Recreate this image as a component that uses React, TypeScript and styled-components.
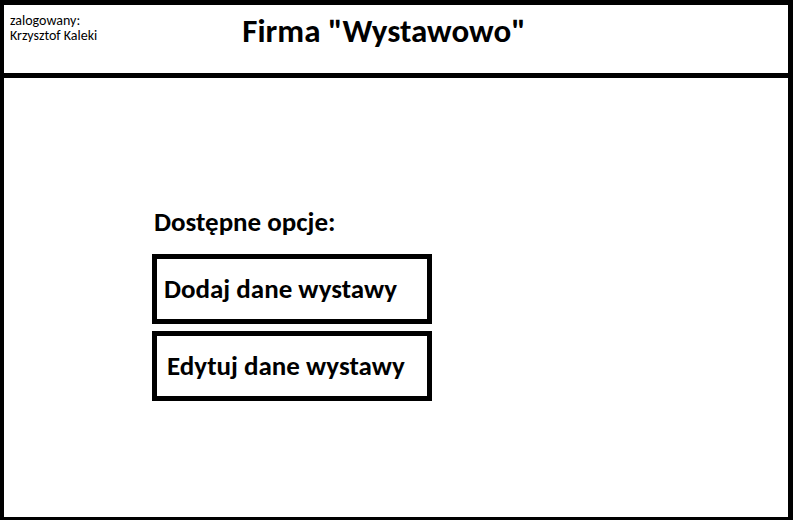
import React from "react";
import styled, { createGlobalStyle } from "styled-components";

const GlobalStyle = createGlobalStyle`
  * { box-sizing: border-box; }
  body { margin: 0; background: #fff; }
`;

const Page = styled.div`
  min-height: 100vh;
  display: flex;
  flex-direction: column;
  border: solid #000;
  border-width: 5px 5px 3px 4px;
  background: #fff;
  color: #000;
  font-family: Carlito, Calibri, Lato, "Open Sans", sans-serif;
`;

const Header = styled.header`
  display: grid;
  grid-template-columns: 1fr auto 1fr;
  min-height: 73px;
  border-bottom: 5px solid #000;
`;

const Session = styled.p`
  margin: 0;
  padding: 8px 0 0 6px;
  font-size: 14px;
  line-height: 15px;
  white-space: nowrap;
`;

const Title = styled.h1`
  margin: 0;
  padding: 6px 24px 0 0;
  font-size: 33px;
  line-height: 40px;
  font-weight: 700;
  white-space: nowrap;
`;

const Options = styled.main`
  display: flex;
  flex-direction: column;
  align-items: flex-start;
  padding: 126px 16px 16px 148px;
`;

const OptionsTitle = styled.h2`
  margin: 0 0 14px 2px;
  font-size: 27px;
  line-height: 36px;
  font-weight: 700;
`;

const OptionList = styled.div`
  display: flex;
  flex-direction: column;
  gap: 7px;
`;

const OptionButton = styled.button<{ $inset: number }>`
  width: 280px;
  height: 70px;
  padding: 0 0 0 ${({ $inset }) => $inset}px;
  border: 5px solid #000;
  background: #fff;
  color: #000;
  font: inherit;
  font-size: 27px;
  line-height: 32px;
  font-weight: 700;
  text-align: left;
  white-space: nowrap;
  cursor: pointer;
`;

export default function App() {
  return (
    <>
      <GlobalStyle />
      <Page>
        <Header>
          <Session>
            zalogowany:
            <br />
            Krzysztof Kaleki
          </Session>
          <Title>Firma "Wystawowo"</Title>
        </Header>
        <Options>
          <OptionsTitle>Dostępne opcje:</OptionsTitle>
          <OptionList>
            <OptionButton type="button" $inset={7}>Dodaj dane wystawy</OptionButton>
            <OptionButton type="button" $inset={10}>Edytuj dane wystawy</OptionButton>
          </OptionList>
        </Options>
      </Page>
    </>
  );
}
